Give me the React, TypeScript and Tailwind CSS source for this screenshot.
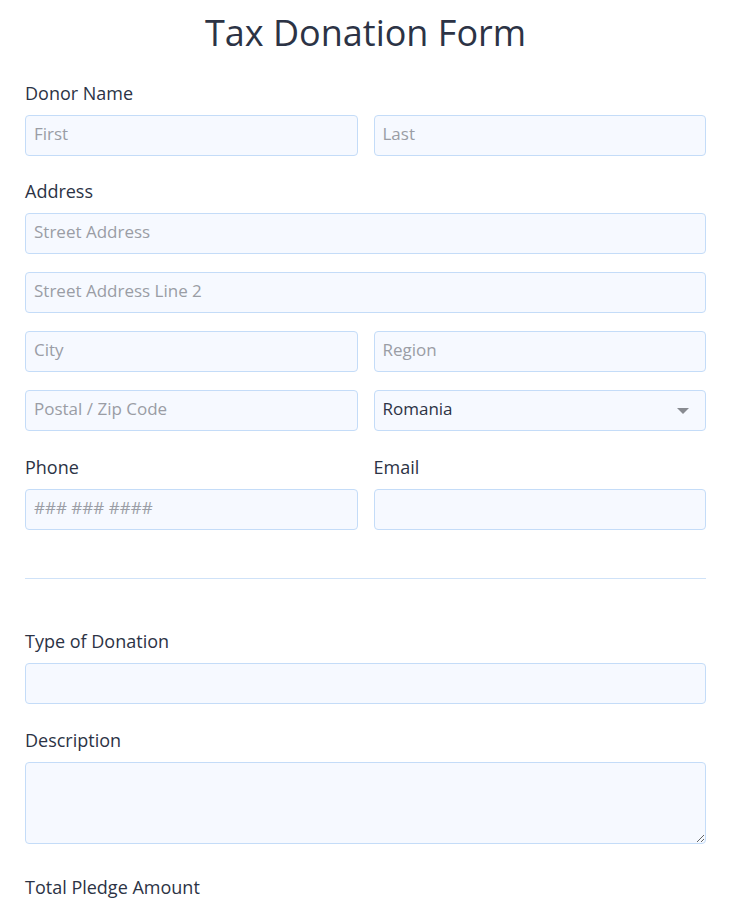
import React from "react";

const inputCls =
  "h-[41px] w-full rounded-[4px] border border-[#c4dcf8] bg-[#f6f9ff] px-[8px] pb-[4px] text-[17px] text-[#2c3345] placeholder:text-[#9a9da5] outline-none";

function Label({ children }: { children: React.ReactNode }) {
  return <div className="h-[24px] text-[18px] leading-[24px] text-[#2c3345] mb-[10px]">{children}</div>;
}

export default function App() {
  return (
    <div className="min-h-[900px] bg-white" style={{ fontFamily: '"Open Sans", "Noto Sans", sans-serif' }}>
      <div className="px-[25px] w-[731px]">
        <h1 className="pt-[9px] h-[57px] text-center text-[36px] leading-[48px] text-[#2c3345] font-normal">Tax Donation Form</h1>
        <div className="mt-[24px]">
          <Label>Donor Name</Label>
          <div className="grid grid-cols-2 gap-[16px]">
            <input className={inputCls} placeholder="First" />
            <input className={inputCls} placeholder="Last" />
          </div>
        </div>
        <div className="mt-[23px]">
          <Label>Address</Label>
          <div className="flex flex-col gap-[18px]">
            <input className={inputCls} placeholder="Street Address" />
            <input className={inputCls} placeholder="Street Address Line 2" />
            <div className="grid grid-cols-2 gap-[16px]">
              <input className={inputCls} placeholder="City" />
              <input className={inputCls} placeholder="Region" />
            </div>
            <div className="grid grid-cols-2 gap-[16px]">
              <input className={inputCls} placeholder="Postal / Zip Code" />
              <div className={inputCls + " flex items-center justify-between pr-[16px]"}>
                <span>Romania</span>
                <svg width="12" height="6" viewBox="0 0 12 6" className="mt-[4px]">
                  <path d="M0 0 L12 0 L6 6 Z" fill="#888b91" />
                </svg>
              </div>
            </div>
          </div>
        </div>
        <div className="mt-[24px] grid grid-cols-2 gap-[16px]">
          <div>
            <Label>Phone</Label>
            <input className={inputCls} placeholder="### ### ####" />
          </div>
          <div>
            <Label>Email</Label>
            <input className={inputCls} />
          </div>
        </div>
        <div className="mt-[48px] h-px bg-[#cfe2f8]" />
        <div className="mt-[50px]">
          <Label>Type of Donation</Label>
          <input className={inputCls} />
        </div>
        <div className="mt-[24px]">
          <Label>Description</Label>
          <textarea className="block h-[82px] w-full rounded-[4px] border border-[#c4dcf8] bg-[#f6f9ff] px-[8px] text-[17px] outline-none" />
        </div>
        <div className="mt-[31px]">
          <Label>Total Pledge Amount</Label>
        </div>
      </div>
    </div>
  );
}
